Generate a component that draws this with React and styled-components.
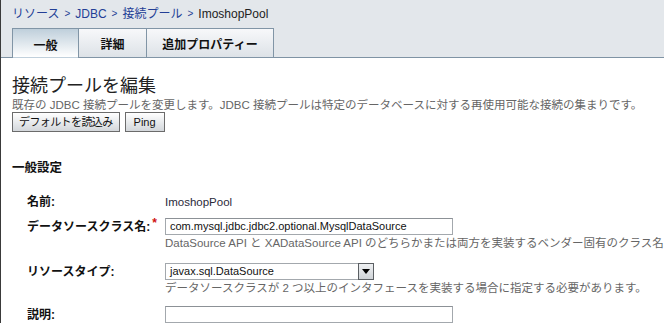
import React from "react";
import styled, { createGlobalStyle } from "styled-components";

const Global = createGlobalStyle`
  html, body { margin: 0; padding: 0; background: #fff; }
  body { font-family: "Liberation Sans", "Noto Sans CJK JP", sans-serif; color: #000; }
`;

const Frame = styled.div`
  height: 323px;
  border-left: 1px solid #3a3a3a;
  box-sizing: border-box;
`;

const Band = styled.div`
  background: #e3e7eb;
  padding-left: 11px;
  border-bottom: 1px solid #7f93a4;
`;

const Crumbs = styled.div`
  height: 28px;
  display: flex;
  align-items: center;
  gap: 5px;
  font-size: 12px;
  line-height: 14px;
`;

const Crumb = styled.span`
  color: ${(p) => (p.$current ? "#222" : "#233f96")};
`;

const Sep = styled.span`
  color: #233f96;
  font-size: 10px;
`;

const Tabs = styled.div`
  display: flex;
  height: 30px;
  margin-bottom: -1px;
`;

const Tab = styled.div`
  width: ${(p) => p.$w}px;
  box-sizing: border-box;
  display: flex;
  align-items: center;
  justify-content: center;
  font-size: 12px;
  font-weight: bold;
  color: #111;
  border: 1px solid #8195a6;
  border-left-width: ${(p) => (p.$first ? 1 : 0)}px;
  border-bottom-color: ${(p) => (p.$active ? "transparent" : "#8195a6")};
  background: ${(p) =>
    p.$active
      ? "linear-gradient(#bfcfdb, #ffffff)"
      : "linear-gradient(#f7f8fa, #dde2e7)"};
  padding-top: ${(p) => (p.$active ? 3 : 0)}px;
`;

const Content = styled.div`
  padding-left: 11px;
`;

const Title = styled.h1`
  margin: 16px 0 0;
  font-size: 18px;
  font-weight: normal;
  line-height: 24px;
  color: #222;
`;

const Desc = styled.div`
  font-size: 11.5px;
  line-height: 14px;
  color: #666;
  white-space: nowrap;
`;

const Buttons = styled.div`
  display: flex;
  gap: 5px;
`;

const Button = styled.button`
  height: 20px;
  padding: 0 6px;
  font-family: inherit;
  font-size: 11px;
  letter-spacing: -0.6px;
  color: #111;
  border: 1px solid #6b6b6b;
  background: linear-gradient(#ffffff, #d3d7db);
  border-radius: 0;
  line-height: 16px;
`;

const PingButton = styled(Button)`
  width: 40px;
  letter-spacing: 0;
`;

const Section = styled.h2`
  margin: 28px 0 0;
  font-size: 12.5px;
  font-weight: bold;
  line-height: 16px;
  color: #111;
`;

const Form = styled.div`
  display: grid;
  grid-template-columns: 138px 1fr;
  margin-top: 19px;
  padding-left: 15px;
`;

const Label = styled.div`
  font-size: 12px;
  font-weight: bold;
  color: #111;
  height: ${(p) => p.$h}px;
  display: flex;
  align-items: flex-start;
  padding-top: ${(p) => p.$pt}px;
  box-sizing: border-box;
  line-height: 14px;
`;

const Req = styled.span`
  color: #d01010;
  font-size: 12px;
  font-weight: bold;
  margin-left: 2px;
  margin-top: -4px;
`;

const Field = styled.div`
  height: ${(p) => p.$h}px;
  box-sizing: border-box;
`;

const Value = styled.div`
  font-size: 11.5px;
  line-height: 14px;
  color: #2a2a3a;
`;

const Input = styled.div`
  width: 288px;
  height: 17px;
  box-sizing: border-box;
  border: 1px solid #a3a8ad;
  border-top-color: #8c9196;
  background: #fff;
  font-size: 11px;
  line-height: 15px;
  padding-left: 4px;
  color: #111;
`;

const Select = styled.div`
  width: 209px;
  height: 17px;
  box-sizing: border-box;
  border: 1px solid #a3a8ad;
  display: flex;
  justify-content: space-between;
  font-size: 11px;
  line-height: 15px;
  padding-left: 4px;
  color: #111;
`;

const Arrow = styled.div`
  width: 16px;
  height: 17px;
  margin: -1px -1px 0 0;
  box-sizing: border-box;
  border: 1px solid #5b5f63;
  background: linear-gradient(#eef0f2, #cfd3d7);
  display: flex;
  align-items: center;
  justify-content: center;
`;

const Help = styled.div`
  font-size: 11.5px;
  line-height: 14px;
  color: #666;
  margin-top: 1px;
  white-space: nowrap;
`;

export default function App() {
  return (
    <>
      <Global />
      <Frame>
        <Band>
          <Crumbs>
            <Crumb>リソース</Crumb>
            <Sep>&gt;</Sep>
            <Crumb>JDBC</Crumb>
            <Sep>&gt;</Sep>
            <Crumb>接続プール</Crumb>
            <Sep>&gt;</Sep>
            <Crumb $current>ImoshopPool</Crumb>
          </Crumbs>
          <Tabs>
            <Tab $w={67} $first $active>一般</Tab>
            <Tab $w={68}>詳細</Tab>
            <Tab $w={127}>追加プロパティー</Tab>
          </Tabs>
        </Band>
        <Content>
          <Title>接続プールを編集</Title>
          <Desc>
            既存の JDBC 接続プールを変更します。JDBC 接続プールは特定のデータベースに対する再使用可能な接続の集まりです。
          </Desc>
          <Buttons>
            <Button>デフォルトを読込み</Button>
            <PingButton>Ping</PingButton>
          </Buttons>
          <Section>一般設定</Section>
          <Form>
            <Label $h={23} $pt={0}>名前:</Label>
            <Field $h={23}>
              <Value>ImoshopPool</Value>
            </Field>
            <Label $h={45} $pt={2}>
              データソースクラス名:<Req>*</Req>
            </Label>
            <Field $h={45}>
              <Input>com.mysql.jdbc.jdbc2.optional.MysqlDataSource</Input>
              <Help>
                DataSource API と XADataSource API のどちらかまたは両方を実装するベンダー固有のクラス名
              </Help>
            </Field>
            <Label $h={43} $pt={2}>リソースタイプ:</Label>
            <Field $h={43}>
              <Select>
                <span>javax.sql.DataSource</span>
                <Arrow>
                  <svg width="8" height="5" viewBox="0 0 8 5">
                    <path d="M0 0h8L4 5z" fill="#000" />
                  </svg>
                </Arrow>
              </Select>
              <Help>
                データソースクラスが 2 つ以上のインタフェースを実装する場合に指定する必要があります。
              </Help>
            </Field>
            <Label $h={20} $pt={2}>説明:</Label>
            <Field $h={20}>
              <Input />
            </Field>
          </Form>
        </Content>
      </Frame>
    </>
  );
}
